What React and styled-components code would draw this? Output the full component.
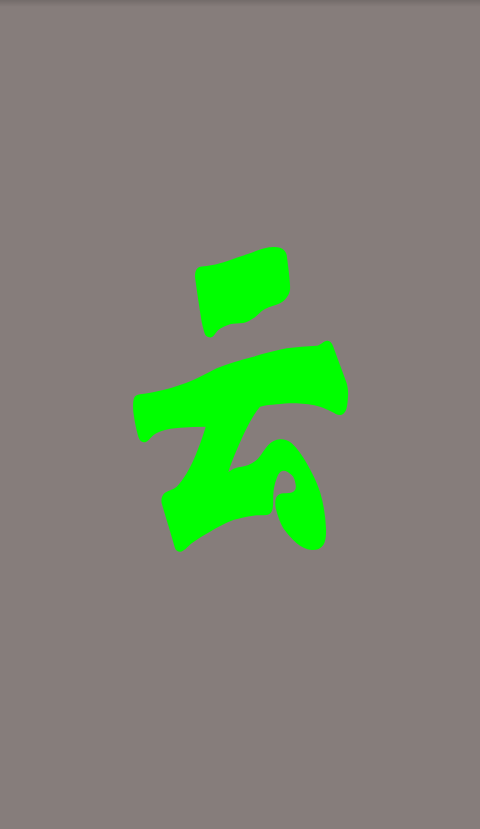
import React from 'react';
import styled, { createGlobalStyle } from 'styled-components';

const GlobalStyle = createGlobalStyle`
  html, body, #root {
    margin: 0;
    padding: 0;
    height: 100%;
  }
`;

const Splash = styled.div`
  position: relative;
  width: 100%;
  height: 100%;
  background-color: #867d7b;
  display: flex;
  align-items: center;
  justify-content: center;
  overflow: hidden;
`;

// soft shadow the status bar leaves on the page
const TopShade = styled.div`
  position: absolute;
  top: 0;
  left: 0;
  right: 0;
  height: 7px;
  background: linear-gradient(to bottom, rgba(0, 0, 0, 0.14), rgba(0, 0, 0, 0));
`;

const Logo = styled.svg`
  display: block;
  width: 220px;
  height: 310px;
  margin-bottom: 29px;
`;

const LOGO_TOP =
  'M195 277 C195 270 197 267 202 266.5 C208 266 214 265 220 263.3 C230 260.5 240 256.5 247 254.3 ' +
  'C254 252 260 249 267 247.8 C273 246.8 277 247 280 247.8 C284 249 286 252 286.7 255 ' +
  'C288 265 289.5 276 290 285 C290.3 289 290 292 288.3 295 C286 299 283.5 301.5 280 303.3 ' +
  'C275 305.7 270 306.5 265 309 C260 311.5 257.5 316 253.3 318.3 C250 320.3 247 322.4 243.3 323 ' +
  'C238.5 323.8 234 323 230 324.3 C225.5 325.8 221.5 327.5 218.3 330 C215.5 332.5 214 337 210.7 337.4 ' +
  'C207.5 337.6 205.5 336 204.5 333 C203.5 329 202.5 326 201.7 322 C199.5 308 197 292 195 277 Z';

const LOGO_BODY =
  'M327.3 340.7 C330 340.5 332 343 333.3 346.7 C337.5 358.5 342.5 371.5 346.7 383.3 ' +
  'C348 388 348.3 392 348 396 C347.7 401 347.5 405 346.5 408.5 C345.3 412.5 343 415 340 415 ' +
  'C337 415 334.5 413 331.7 411.7 C327.5 409.7 324 407.8 320 406.7 C312.5 404.7 304.5 403.7 296.7 403.3 ' +
  'C290 403 283 403.7 276.7 404.3 C271 404.8 265.5 405.2 260 406.7 ' +
  'C255.5 412 252 418 248.3 425 C244 433 240.5 441 236.7 450 C233.5 457.5 230.5 465 228.3 472.3 ' +
  'C230.5 470.5 232.5 469.2 235 468.3 C239.5 466.8 244 466.6 248.3 465 C252 463.5 255.5 461.5 258.3 458.3 ' +
  'C262 454 264.5 449 268.3 445 C271.5 441.6 275.5 439.5 280 439.3 C284.5 439.2 288.5 440.5 291.7 443.3 ' +
  'C297.5 448.5 302.5 456 306.7 463.3 C312 472.5 316.5 481.5 320 491.7 C323.5 503.5 325.5 516 326 528.3 ' +
  'C326.3 534 326 540.5 323.3 545 C320.5 549 316 550.3 311.7 550 C306 549.6 301 547 296.7 543.3 ' +
  'C291 538.3 287 533.5 283.3 528.3 C280 522.5 277.5 515.5 275.7 508.3 C275 503.5 275 499.5 276.7 496.7 ' +
  'C278.2 494.3 280.5 493.6 283.3 493.3 C287 493 290.5 493.4 293.3 491.7 C295.5 490 296.2 488 295.7 485 ' +
  'C295 480.5 294 477 291.7 475 C289 472.5 286 470.5 283.3 470.7 C280 471 278 474.5 276.7 478.3 ' +
  'C274.5 484 273.5 489.5 273.3 495 C273 499.5 273.5 504 272.7 508.3 C272 512 270 514.7 266.7 515 ' +
  'C262 515.4 258 515 253.3 515.7 C246.5 516.6 240 518 233.3 520 C225 523 217 527.5 210 531.7 ' +
  'C203.5 535.5 197.5 539 191.7 543.3 C187.5 546.5 184 551.8 180 551.7 C177.5 551.6 176 550.5 175 548.3 ' +
  'C171 534 166 518 161.7 503.3 C160.8 499 162 495 165 492.7 C168.5 490.3 173 489.8 176.7 486.7 ' +
  'C180.5 483 183.5 478.5 186.7 473.3 C191 466 195 457.5 198.3 448.3 C201 441.5 203.5 434 205.7 426.7 ' +
  'C197 426.7 188.5 427 180 427.7 C173.5 428.3 167 429 161.7 431 C158 432.3 154.5 434 151.7 436.7 ' +
  'C149 439.5 147 442.5 144 442.3 C141 442 139.5 440 138.3 436.7 C136 428.5 134.3 420 133.3 411.7 ' +
  'C133 406.5 132.8 402 134 398.3 C135 395.5 137 394.8 140 394.3 C148 393.3 155.5 392 163.3 390 ' +
  'C173.5 387.5 183.5 384 193.3 380 C201 376.8 209 372 216.7 368.3 C228 363.5 241 360 253.3 356.7 ' +
  'C264.5 353.5 275.5 350.3 286.7 348.3 C296.5 346.8 306.5 346.6 316.7 345.7 C320.5 345.3 323.5 341 327.3 340.7 Z';

const App = () => {
  return (
    <>
      <GlobalStyle />
      <Splash>
        <TopShade />
        <Logo viewBox="130 245 220 310" aria-hidden="true">
          <path d={LOGO_TOP} fill="#00ff00" />
          <path d={LOGO_BODY} fill="#00ff00" />
        </Logo>
      </Splash>
    </>
  );
};

export default App;
